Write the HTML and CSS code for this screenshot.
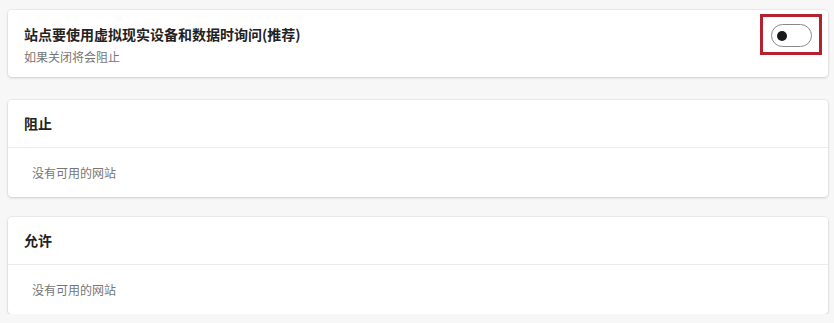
FILE: index.html
```html
<!DOCTYPE html>
<html lang="zh-CN">
<head>
<meta charset="utf-8">
<link rel="stylesheet" href="styles.css">
</head>
<body>
<main class="page">
  <section class="card setting">
    <div class="setting-text">
      <div class="setting-title">站点要使用虚拟现实设备和数据时询问(推荐)</div>
      <div class="setting-sub">如果关闭将会阻止</div>
    </div>
    <div class="highlight">
      <span class="toggle"><span class="knob"></span></span>
    </div>
  </section>

  <section class="card list list-block">
    <div class="list-head">阻止</div>
    <div class="list-body">没有可用的网站</div>
  </section>

  <section class="card list list-allow">
    <div class="list-head">允许</div>
    <div class="list-body">没有可用的网站</div>
  </section>
</main>
</body>
</html>
```
FILE: styles.css
```css
html, body {
  margin: 0;
  padding: 0;
  background: #f7f7f7;
  font-family: "Noto Sans CJK SC", "Noto Sans", sans-serif;
  color: #1f1f1f;
}
.page {
  padding: 10px 6px 0 8px;
  display: flex;
  flex-direction: column;
}
.card {
  background: #ffffff;
  border-radius: 4px;
  box-shadow: 0 0 0 1px rgba(0,0,0,0.035), 0 1px 3px rgba(0,0,0,0.14);
}
.setting {
  display: flex;
  justify-content: space-between;
  align-items: flex-start;
  padding: 4px 6px 11px 16px;
  height: 52px;
}
.setting-text {
  padding-top: 10px;
}
.setting-title {
  font-size: 14px;
  font-weight: 700;
  line-height: 20px;
  color: #222222;
}
.setting-sub {
  margin-top: 4px;
  font-size: 12px;
  line-height: 18px;
  color: #767676;
}
.highlight {
  box-sizing: border-box;
  width: 62px;
  height: 41px;
  border: 3px solid #b4232d;
  display: flex;
  align-items: center;
  padding: 2px 0 0 8px;
}
.toggle {
  box-sizing: border-box;
  width: 41px;
  height: 23px;
  border: 1px solid #8a8a8a;
  border-radius: 12px;
  background: #fff;
  display: flex;
  align-items: center;
  padding-left: 5px;
}
.knob {
  width: 10px;
  height: 10px;
  border-radius: 50%;
  background: #1a1a1a;
}
.list-block {
  margin-top: 23px;
}
.list-allow {
  margin-top: 20px;
}
.list-head {
  height: 47px;
  line-height: 47px;
  padding: 0 16px;
  font-size: 14px;
  font-weight: 700;
  color: #222222;
  border-bottom: 1px solid #ececec;
}
.list-body {
  height: 49px;
  line-height: 49px;
  padding: 0 24px;
  font-size: 12px;
  color: #767676;
}
```
